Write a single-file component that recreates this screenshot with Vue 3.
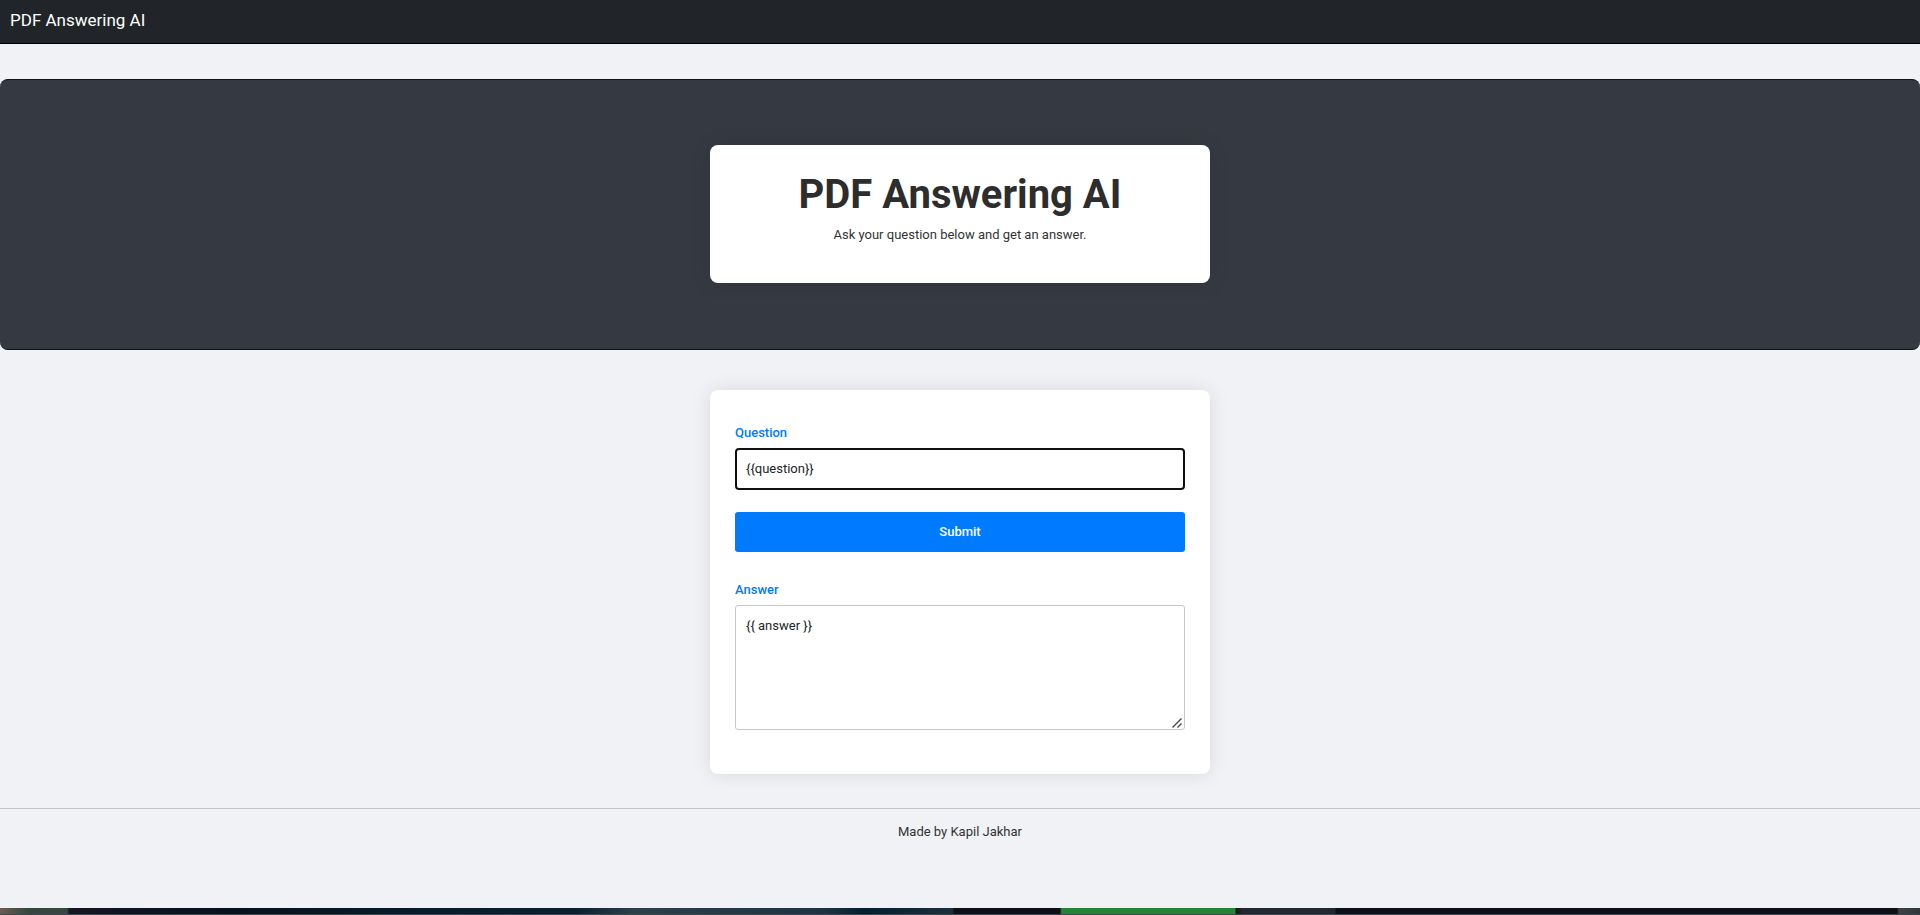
<script setup>
import { ref } from 'vue'

const question = ref('{{question}}')
const answer = ref('{{ answer }}')
</script>

<template>
  <div class="page">
    <nav class="navbar">
      <a class="brand" href="#">PDF Answering AI</a>
    </nav>

    <header class="hero">
      <div class="card intro">
        <h1>PDF Answering AI</h1>
        <p>Ask your question below and get an answer.</p>
      </div>
    </header>

    <main class="content">
      <form class="card form" @submit.prevent>
        <label for="question">Question</label>
        <input id="question" v-model="question" class="field question" type="text" />
        <button class="submit" type="submit">Submit</button>
        <label for="answer">Answer</label>
        <div class="answer-box">
          <textarea id="answer" v-model="answer" class="field answer"></textarea>
          <svg class="grip" viewBox="0 0 10 10" aria-hidden="true">
            <path d="M0.5 9.5 L9.5 0.5 M5.5 9.5 L9.5 5.5" />
          </svg>
        </div>
      </form>
    </main>

    <footer class="footer">Made by Kapil Jakhar</footer>

    <div class="strip" aria-hidden="true"></div>
  </div>
</template>

<style>
body {
  margin: 0;
}
</style>

<style scoped>
.page {
  display: flex;
  flex-direction: column;
  min-height: 100vh;
  background: #f0f2f5;
  color: #333;
  font-family: Roboto, "Liberation Sans", sans-serif;
  font-size: 13px;
  line-height: 20px;
}

.page * {
  box-sizing: border-box;
}

.navbar {
  display: flex;
  padding: 8px 10px 11px;
  border-bottom: 1px solid #000;
  background: #212529;
}

.brand {
  color: #fff;
  font-size: 17px;
  line-height: 24px;
  text-decoration: none;
}

.hero {
  margin-top: 35px;
  padding: 65px 0 66px;
  border: 1px solid #07131f;
  border-width: 1px 0;
  border-radius: 8px;
  background: #353941;
}

.card {
  width: 500px;
  max-width: 100%;
  margin: 0 auto;
  border-radius: 8px;
  background: #fff;
  box-shadow: 0 0 20px rgba(0, 0, 0, 0.1);
}

.intro {
  padding: 26px 24px 38px;
  text-align: center;
}

h1 {
  margin: 0 0 6px;
  color: #2d2d2d;
  font-size: 40px;
  font-weight: 700;
  line-height: 48px;
}

p {
  margin: 0;
}

.content {
  padding: 40px 0 34px;
}

.form {
  display: flex;
  flex-direction: column;
  padding: 33px 25px 44px;
}

label {
  margin-bottom: 5px;
  color: #007bff;
  font-weight: 500;
}

.field {
  width: 100%;
  border-radius: 4px;
  background: #fff;
  color: #212529;
  font: inherit;
  outline: none;
}

.question {
  height: 42px;
  padding: 0 9px 2px;
  border: 2px solid #101010;
}

.submit {
  height: 40px;
  margin: 22px 0 28px;
  border: 0;
  border-radius: 3px;
  background: #007bff;
  color: #fff;
  font: inherit;
  font-weight: 500;
}

.answer-box {
  position: relative;
  display: flex;
}

.answer {
  height: 125px;
  padding: 10px;
  border: 1px solid #c8c8c8;
  border-radius: 3px;
  resize: none;
}

.grip {
  position: absolute;
  right: 3px;
  bottom: 2px;
  width: 10px;
  height: 10px;
  fill: none;
  stroke: #444;
  stroke-width: 1.4;
}

.footer {
  padding: 13px 0;
  border-top: 1px solid #c1c2c5;
  text-align: center;
}

.strip {
  height: 7px;
  margin-top: auto;
  background:
    linear-gradient(#3b4650, #3b4650) bottom / 100% 1px no-repeat,
    linear-gradient(
      90deg,
      #6b5d50 0,
      #36463f 1.5%,
      #35483f 3.5%,
      #151622 3.6%,
      #07111c 12%,
      #061d2c 22%,
      #09202f 30%,
      #2b414c 33%,
      #1c3442 43%,
      #04202f 45%,
      #1a303c 49.6%,
      #0d1017 49.7%,
      #0d1017 55.2%,
      #238636 55.3%,
      #238636 64.3%,
      #12161d 64.4%,
      #22282d 64.7%,
      #22282d 69.5%,
      #0d1017 69.6%,
      #0d1017 98.8%,
      #404141 98.9%,
      #303936 100%
    );
}
</style>
